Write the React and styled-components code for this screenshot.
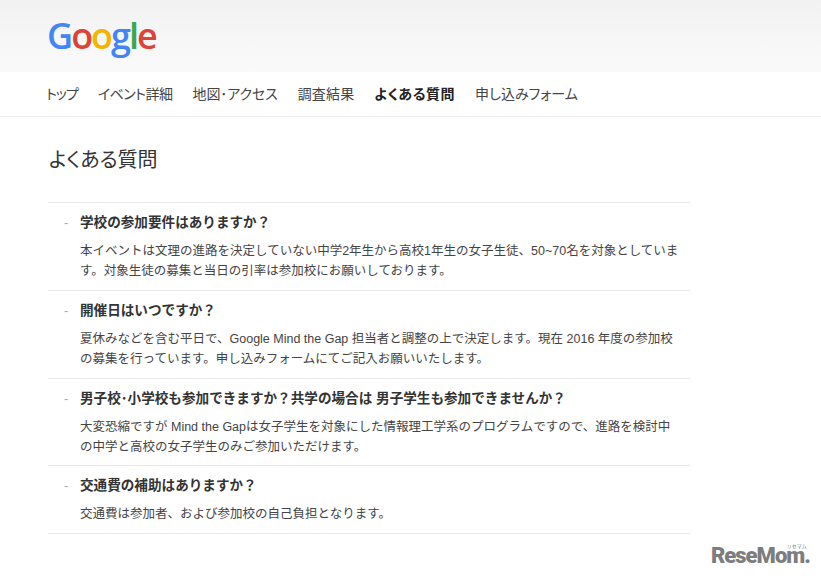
import React from "react";
import styled, { createGlobalStyle } from "styled-components";

const GlobalStyle = createGlobalStyle`
  html, body {
    margin: 0;
    padding: 0;
    background: #fff;
    font-family: "Liberation Sans", "Noto Sans CJK JP", sans-serif;
    color: #333;
  }
`;

const Page = styled.div`
  position: relative;
  width: 821px;
  height: 578px;
  overflow: hidden;
`;

const Header = styled.header`
  height: 72px;
  box-sizing: border-box;
  padding: 12px 0 0 47px;
  background: linear-gradient(#f2f2f2, #fafafa);
`;

const Logo = styled.div`
  font-family: "Open Sans", sans-serif;
  font-size: 36px;
  line-height: 48px;
  font-weight: 600;
  letter-spacing: -2px;
`;

const LogoLetter = styled.span`
  color: ${(props) => props.$color};
`;

const Nav = styled.nav`
  height: 45px;
  box-sizing: border-box;
  display: flex;
  align-items: center;
  gap: 20px;
  padding: 0 0 2px 46px;
  border-bottom: 1px solid #eee;
`;

const NavItem = styled.a`
  font-size: 14px;
  font-feature-settings: "palt";
  letter-spacing: ${(props) => props.$spacing}px;
  font-weight: ${(props) => (props.$active ? 700 : 400)};
  color: ${(props) => (props.$active ? "#222" : "#444")};
`;

const Main = styled.main`
  width: 642px;
  margin-left: 48px;
`;

const Title = styled.h1`
  margin: 30px 0 29px 1px;
  font-size: 20px;
  font-feature-settings: "palt";
  line-height: 26px;
  font-weight: 400;
  color: #333;
`;

const FaqList = styled.ul`
  list-style: none;
  margin: 0;
  padding: 0;
  border-top: 1px solid #e8e8e8;
`;

const FaqItem = styled.li`
  position: relative;
  padding: 10px 10px 9px 32px;
  border-bottom: 1px solid #e8e8e8;

  &::before {
    content: "-";
    position: absolute;
    left: 16px;
    top: 10px;
    font-size: 13px;
    line-height: 20px;
    color: #aaa;
  }

  &:nth-child(3) {
    padding-bottom: 8px;
  }
`;

const Question = styled.h2`
  margin: 0 0 8px;
  font-size: 13.6px;
  line-height: 20px;
  font-weight: 700;
  color: #333;
`;

const Answer = styled.p`
  margin: 0;
  font-size: 12.5px;
  line-height: 20px;
  color: #444;
`;

const Watermark = styled.div`
  position: absolute;
  left: 711px;
  top: 548px;
  font-family: "Roboto", sans-serif;
  font-size: 22px;
  line-height: 16px;
  font-weight: 900;
  letter-spacing: -1px;
  color: #7d7d7d;
`;

const WatermarkRuby = styled.span`
  position: absolute;
  right: 3px;
  top: -5px;
  font-family: "Noto Sans CJK JP", sans-serif;
  font-size: 5px;
  line-height: 5px;
  font-weight: 400;
  letter-spacing: 0;
  color: #777;
`;

const faqs = [
  {
    q: "学校の参加要件はありますか？",
    a: "本イベントは文理の進路を決定していない中学2年生から高校1年生の女子生徒、50~70名を対象としています。対象生徒の募集と当日の引率は参加校にお願いしております。",
  },
  {
    q: "開催日はいつですか？",
    a: "夏休みなどを含む平日で、Google Mind the Gap 担当者と調整の上で決定します。現在 2016 年度の参加校の募集を行っています。申し込みフォームにてご記入お願いいたします。",
  },
  {
    q: "男子校･小学校も参加できますか？共学の場合は 男子学生も参加できませんか？",
    a: "大変恐縮ですが Mind the Gapは女子学生を対象にした情報理工学系のプログラムですので、進路を検討中の中学と高校の女子学生のみご参加いただけます。",
  },
  {
    q: "交通費の補助はありますか？",
    a: "交通費は参加者、および参加校の自己負担となります。",
  },
];

const navItems = [
  { label: "トップ", spacing: -1 },
  { label: "イベント詳細", spacing: -0.5 },
  { label: "地図･アクセス", spacing: -0.1 },
  { label: "調査結果", spacing: 0.2 },
  { label: "よくある質問", spacing: 0.5, active: true },
  { label: "申し込みフォーム", spacing: 0 },
];

const logoLetters = [
  ["G", "#4285f4"],
  ["o", "#db4437"],
  ["o", "#f4b400"],
  ["g", "#4285f4"],
  ["l", "#34a853"],
  ["e", "#db4437"],
];

const App = () => {
  return (
    <Page>
      <GlobalStyle />
      <Header>
        <Logo>
          {logoLetters.map(([letter, color], i) => (
            <LogoLetter key={i} $color={color}>
              {letter}
            </LogoLetter>
          ))}
        </Logo>
      </Header>
      <Nav>
        {navItems.map((item) => (
          <NavItem key={item.label} $spacing={item.spacing} $active={item.active}>
            {item.label}
          </NavItem>
        ))}
      </Nav>
      <Main>
        <Title>よくある質問</Title>
        <FaqList>
          {faqs.map((faq) => (
            <FaqItem key={faq.q}>
              <Question>{faq.q}</Question>
              <Answer>{faq.a}</Answer>
            </FaqItem>
          ))}
        </FaqList>
      </Main>
      <Watermark>
        ReseMom.
        <WatermarkRuby>リセマム</WatermarkRuby>
      </Watermark>
    </Page>
  );
};

export default App;
